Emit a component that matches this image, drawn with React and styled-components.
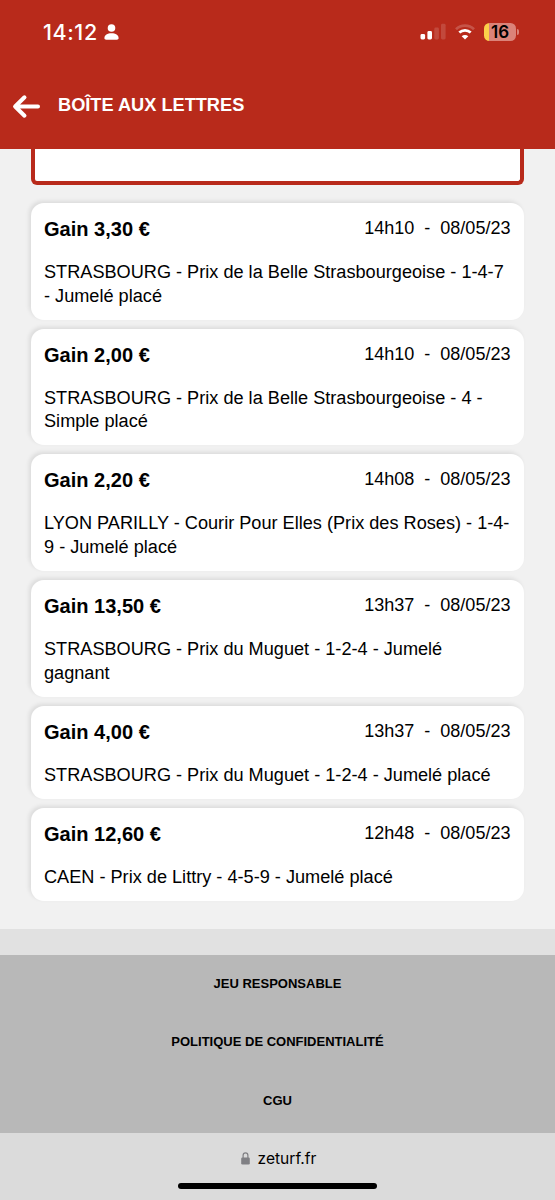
import React from 'react';
import styled, { createGlobalStyle } from 'styled-components';

const GlobalStyle = createGlobalStyle`
  * {
    box-sizing: border-box;
  }

  body {
    margin: 0;
    background-color: #f1f1f1;
    color: #000;
    font-family: 'Liberation Sans', Arial, sans-serif;
  }
`;

const Screen = styled.div`
  display: flex;
  flex-direction: column;
  width: 555px;
  height: 1200px;
  overflow: hidden;
`;

const Header = styled.header`
  flex: none;
  height: 149px;
  background-color: #b82a1b;
  color: white;
`;

const StatusBar = styled.div`
  display: flex;
  align-items: center;
  justify-content: space-between;
  height: 63px;
  padding: 0 36px 0 43px;
`;

const Clock = styled.div`
  display: flex;
  align-items: center;
  gap: 6px;
  font-family: Inter, sans-serif;
  font-size: 21.5px;
  font-weight: 500;
  letter-spacing: 0.6px;
`;

const StatusIcons = styled.div`
  display: flex;
  align-items: center;
  gap: 9px;
`;

const BatteryWrapper = styled.div`
  display: flex;
  align-items: center;
  gap: 1px;
`;

const Battery = styled.div`
  width: 32px;
  height: 18px;
  border-radius: 5.5px;
  background: linear-gradient(to right, #fbd04a 5px, #db8379 5px);
  color: black;
  font-family: Inter, sans-serif;
  font-size: 17px;
  font-weight: 600;
  line-height: 18px;
  text-align: center;
`;

const BatteryTip = styled.span`
  width: 2px;
  height: 6px;
  border-radius: 0 2px 2px 0;
  background-color: #db8379;
`;

const TitleBar = styled.div`
  display: flex;
  align-items: center;
  height: 86px;
  padding-left: 12px;
`;

const Title = styled.h1`
  margin: 0 0 2px 17px;
  font-size: 18.2px;
  line-height: 22px;
`;

const Content = styled.main`
  flex: none;
  height: 780px;
  padding: 0 31px;
`;

const SearchBox = styled.div`
  height: 36px;
  margin-bottom: 18px;
  border: 4px solid #b82a1b;
  border-top: none;
  border-radius: 0 0 6px 6px;
  background-color: white;
`;

const MessageList = styled.div`
  display: flex;
  flex-direction: column;
  gap: 9.2px;
`;

const Card = styled.article`
  padding: 13px 13px 11.5px;
  border-radius: 13px;
  background-color: white;
  box-shadow: -2px -2px 4px rgba(0, 0, 0, 0.09);
`;

const CardHeader = styled.div`
  display: flex;
  justify-content: space-between;
  height: 45px;
  line-height: 26px;
`;

const Amount = styled.h2`
  margin: 0;
  font-size: 20.05px;
`;

const DateText = styled.span`
  margin-right: 0.5px;
  font-size: 18.05px;
  line-height: 24px;
  white-space: pre;
`;

const Description = styled.p`
  margin: 0;
  font-size: 18.15px;
  line-height: 23.5px;
`;

const Separator = styled.div`
  flex: none;
  height: 26px;
  background-color: #e1e1e1;
`;

const Footer = styled.footer`
  display: flex;
  flex: none;
  flex-direction: column;
  align-items: center;
  height: 178px;
  background-color: #b8b8b8;
`;

const FooterLink = styled.a`
  height: 58.4px;
  color: black;
  font-size: 13px;
  font-weight: bold;
  line-height: 58px;
`;

const BrowserBar = styled.div`
  display: flex;
  flex: none;
  flex-direction: column;
  align-items: center;
  height: 67px;
  background-color: #dbdbdb;
`;

const Address = styled.div`
  display: flex;
  align-items: center;
  gap: 8px;
  height: 50px;
  padding-left: 2px;
  font-family: Inter, sans-serif;
  font-size: 15.6px;
`;

const HomeIndicator = styled.div`
  width: 199px;
  height: 6px;
  border-radius: 3px;
  background-color: black;
`;

const messages = [
  { amount: '3,30', time: '14h10', text: 'STRASBOURG - Prix de la Belle Strasbourgeoise - 1-4-7 - Jumelé placé' },
  { amount: '2,00', time: '14h10', text: 'STRASBOURG - Prix de la Belle Strasbourgeoise - 4 - Simple placé' },
  { amount: '2,20', time: '14h08', text: 'LYON PARILLY - Courir Pour Elles (Prix des Roses) - 1-4-9 - Jumelé placé' },
  { amount: '13,50', time: '13h37', text: 'STRASBOURG - Prix du Muguet - 1-2-4 - Jumelé gagnant' },
  { amount: '4,00', time: '13h37', text: 'STRASBOURG - Prix du Muguet - 1-2-4 - Jumelé placé' },
  { amount: '12,60', time: '12h48', text: 'CAEN - Prix de Littry - 4-5-9 - Jumelé placé' },
];

const links = ['JEU RESPONSABLE', 'POLITIQUE DE CONFIDENTIALITÉ', 'CGU'];

const PersonIcon = () => (
  <svg width="15" height="16" viewBox="0 0 15 16" fill="white">
    <circle cx="7.5" cy="4" r="3.8" />
    <path d="M0.4 14C0.4 11.2 3.4 9.2 7.5 9.2s7.1 2 7.1 4.8c0 1.1-.6 1.7-1.8 1.7H2.2C1 15.7.4 15.1.4 14z" />
  </svg>
);

const SignalIcon = () => (
  <svg width="26" height="17" viewBox="0 0 26 17" fill="white">
    <rect x="0.5" y="11" width="4.6" height="5.5" rx="1.4" />
    <rect x="7.4" y="8" width="4.6" height="8.5" rx="1.4" />
    <rect x="14.3" y="4.5" width="4.6" height="12" rx="1.4" opacity="0.15" />
    <rect x="21" y="0.8" width="4.6" height="15.7" rx="1.4" opacity="0.15" />
  </svg>
);

const WifiIcon = () => (
  <svg width="20" height="16" viewBox="0 0 20 16" fill="none" stroke="white" strokeWidth="2.7">
    <path d="M1 5.3C6 .5 14 .5 19 5.3" opacity="0.2" />
    <path d="M4.3 8.6c3.2-3 8.2-3 11.4 0" />
    <path d="M10 15.6l-3.3-3.3c1.9-1.7 4.7-1.7 6.6 0z" fill="white" stroke="none" />
  </svg>
);

const BackIcon = () => (
  <svg
    width="29"
    height="25"
    viewBox="0 0 29 25"
    fill="none"
    stroke="white"
    strokeWidth="4"
    strokeLinecap="round"
    strokeLinejoin="round"
  >
    <path d="M26 12.5H3.4M12.5 3.3L3.1 12.5l9.4 9.2" />
  </svg>
);

const LockIcon = () => (
  <svg width="9" height="13" viewBox="0 0 9 13">
    <path d="M2.1 6V3.6a2.4 2.7 0 0 1 4.8 0V6" fill="none" stroke="#808084" strokeWidth="1.2" />
    <rect x="0.2" y="5.4" width="8.6" height="7.1" rx="1.3" fill="#808084" />
  </svg>
);

const Message = ({ amount, time, text }) => (
  <Card>
    <CardHeader>
      <Amount>Gain {amount} €</Amount>
      <DateText>{`${time}  -  08/05/23`}</DateText>
    </CardHeader>
    <Description>{text}</Description>
  </Card>
);

const App = () => {
  return (
    <Screen>
      <GlobalStyle />
      <Header>
        <StatusBar>
          <Clock>
            14:12
            <PersonIcon />
          </Clock>
          <StatusIcons>
            <SignalIcon />
            <WifiIcon />
            <BatteryWrapper>
              <Battery>16</Battery>
              <BatteryTip />
            </BatteryWrapper>
          </StatusIcons>
        </StatusBar>
        <TitleBar>
          <BackIcon />
          <Title>BOÎTE AUX LETTRES</Title>
        </TitleBar>
      </Header>

      <Content>
        <SearchBox />
        <MessageList>
          {messages.map((message, index) => (
            <Message key={index} {...message} />
          ))}
        </MessageList>
      </Content>

      <Separator />
      <Footer>
        {links.map((link) => (
          <FooterLink key={link}>{link}</FooterLink>
        ))}
      </Footer>

      <BrowserBar>
        <Address>
          <LockIcon />
          zeturf.fr
        </Address>
        <HomeIndicator />
      </BrowserBar>
    </Screen>
  );
};

export default App;
